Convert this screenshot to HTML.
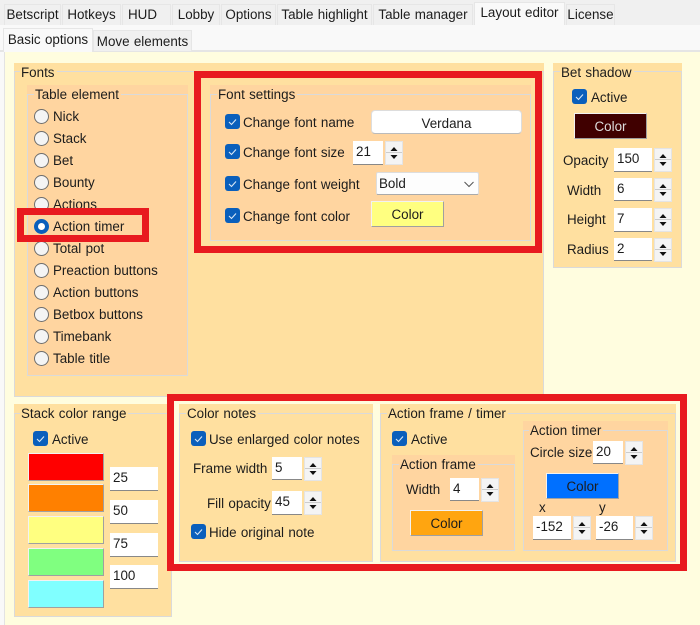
<!DOCTYPE html>
<html><head><meta charset="utf-8"><style>
html,body{margin:0;padding:0}
#r{position:relative;width:700px;height:625px;overflow:hidden;background:#fffddf;font:13.4px/20px "Liberation Sans",sans-serif;word-spacing:.6px;color:#1c1c1c}
#r div{position:absolute;box-sizing:border-box}
.t{white-space:nowrap;height:20px;margin-top:1px}
.tab{background:#f0f0f0;border:1px solid #e6e6e6;border-bottom:0;text-align:center;line-height:20px;white-space:nowrap}
.o{background:#ffe0a0}.a{background:#ffd5a0}
.b{border:1px solid #dadada}
.l{white-space:nowrap;height:17px;line-height:17px;padding:0 2px 0 1px}
.c{width:15px;height:15px;background:#0a5fbc;border-radius:3px}
.c svg{position:absolute;left:0;top:0}
.r{width:15px;height:15px;border-radius:50%;background:#f4f4f4;border:1.5px solid #6e6e6e}
.i{background:#fff;border-bottom:1px solid #888;line-height:22px;padding-left:3px}
.s{width:18px;background:#f4f4f4;border:1px solid #e4e4e4}
.s svg{position:absolute;left:0;top:0}
.k{border:1px solid #f2f2f2;border-bottom-color:#a0a0a0;border-right-color:#a0a0a0;text-align:center;line-height:26px}
.red{border:7px solid #e81a1f}
</style></head><body><div id="r">
<div style="left:0;top:0;width:700px;height:25px;background:#f0f0f0"></div>
<div style="left:0;top:25px;width:700px;height:27px;background:#f9f9f9"></div>
<div style="left:0;top:50px;width:700px;height:2px;background:#e5e5e5"></div>
<div style="left:0;top:52px;width:4px;height:573px;background:#f9f9f9"></div>
<div style="left:4px;top:52px;width:1px;height:573px;background:#e3e3e3"></div>
<div class="tab" style="left:4px;top:4px;width:57px;height:21px">Betscript</div>
<div class="tab" style="left:62px;top:4px;width:59px;height:21px">Hotkeys</div>
<div class="tab" style="left:122px;top:4px;width:49px;height:21px;text-align:left;padding-left:5px">HUD</div>
<div class="tab" style="left:172px;top:4px;width:48px;height:21px">Lobby</div>
<div class="tab" style="left:221px;top:4px;width:55px;height:21px">Options</div>
<div class="tab" style="left:277px;top:4px;width:95px;height:21px">Table highlight</div>
<div class="tab" style="left:373px;top:4px;width:100px;height:21px">Table manager</div>
<div class="tab" style="left:474px;top:2px;width:91px;height:23px;background:#f9f9f9">Layout editor</div>
<div class="tab" style="left:566px;top:4px;width:49px;height:21px">License</div>
<div class="tab" style="left:3px;top:28px;width:90px;height:24px;background:#f9f9f9;line-height:22px">Basic options</div>
<div class="tab" style="left:93px;top:30px;width:99px;height:21px;line-height:21px">Move elements</div>

<div class="o" style="left:14px;top:63px;width:530px;height:334px"></div>
<div class="b" style="left:14px;top:71px;width:530px;height:326px"></div>
<div class="t o l" style="left:20px;top:63px">Fonts</div>
<div class="a" style="left:27px;top:85px;width:161px;height:291px"></div>
<div class="b" style="left:27px;top:94px;width:161px;height:282px"></div>
<div class="t a l" style="left:34px;top:85px">Table element</div>

<div class="r" style="left:34px;top:109px"></div><div class="t" style="left:53px;top:106px">Nick</div>
<div class="r" style="left:34px;top:131px"></div><div class="t" style="left:53px;top:128px">Stack</div>
<div class="r" style="left:34px;top:153px"></div><div class="t" style="left:53px;top:150px">Bet</div>
<div class="r" style="left:34px;top:175px"></div><div class="t" style="left:53px;top:172px">Bounty</div>
<div class="r" style="left:34px;top:197px"></div><div class="t" style="left:53px;top:194px">Actions</div>
<div class="r" style="left:34px;top:219px;background:#fff;border:4px solid #0a5fbc"></div><div class="t" style="left:53px;top:216px">Action timer</div>
<div class="r" style="left:34px;top:241px"></div><div class="t" style="left:53px;top:238px">Total pot</div>
<div class="r" style="left:34px;top:263px"></div><div class="t" style="left:53px;top:260px">Preaction buttons</div>
<div class="r" style="left:34px;top:285px"></div><div class="t" style="left:53px;top:282px">Action buttons</div>
<div class="r" style="left:34px;top:307px"></div><div class="t" style="left:53px;top:304px">Betbox buttons</div>
<div class="r" style="left:34px;top:329px"></div><div class="t" style="left:53px;top:326px">Timebank</div>
<div class="r" style="left:34px;top:351px"></div><div class="t" style="left:53px;top:348px">Table title</div>
<div class="red" style="left:17px;top:208px;width:132px;height:34px"></div>

<div class="a" style="left:210px;top:85px;width:321px;height:156px"></div>
<div class="b" style="left:210px;top:94px;width:321px;height:147px"></div>
<div class="t a l" style="left:217px;top:85px">Font settings</div>
<div class="red" style="left:194px;top:71px;width:348px;height:182px"></div>

<div class="c" style="left:225px;top:114px"><svg width="15" height="15"><path d="M4 8l2.500 2.500L11 5.500" fill="none" stroke="#dbe8f6" stroke-width="1.100"/></svg></div>
<div class="t" style="left:243px;top:112px">Change font name</div>
<div style="left:371px;top:110px;width:151px;height:24px;background:#fff;border:1px solid #ddd;border-bottom-color:#bbb;border-radius:4px;text-align:center;line-height:25px">Verdana</div>
<div class="c" style="left:225px;top:144px"><svg width="15" height="15"><path d="M4 8l2.500 2.500L11 5.500" fill="none" stroke="#dbe8f6" stroke-width="1.100"/></svg></div>
<div class="t" style="left:243px;top:142px">Change font size</div>
<div class="i" style="left:353px;top:141px;width:30px;height:24px">21</div>
<div class="s" style="left:385px;top:141px;height:24px"><svg width="16" height="22"><path d="M0 10.500h16" stroke="#ccc"/><path d="M8 5l3.500 4h-7z M4.500 13h7l-3.500 4z" fill="#111"/></svg></div>
<div class="c" style="left:225px;top:176px"><svg width="15" height="15"><path d="M4 8l2.500 2.500L11 5.500" fill="none" stroke="#dbe8f6" stroke-width="1.100"/></svg></div>
<div class="t" style="left:243px;top:174px">Change font weight</div>
<div style="left:376px;top:172px;width:103px;height:23px;background:#fdfdfd;border:1px solid #ddd;border-bottom-color:#aaa;border-radius:2px;line-height:21px;padding-left:2px">Bold<svg style="position:absolute;left:87px;top:8px" width="10" height="7"><path d="M.5 1l4.500 4.500L9.500 1" fill="none" stroke="#555"/></svg></div>
<div class="c" style="left:225px;top:208px"><svg width="15" height="15"><path d="M4 8l2.500 2.500L11 5.500" fill="none" stroke="#dbe8f6" stroke-width="1.100"/></svg></div>
<div class="t" style="left:243px;top:206px">Change font color</div>
<div class="k" style="left:371px;top:201px;width:73px;height:26px;background:#ffff80">Color</div>

<div class="o" style="left:553px;top:63px;width:129px;height:205px"></div>
<div class="b" style="left:553px;top:71px;width:129px;height:197px"></div>
<div class="t o l" style="left:560px;top:63px">Bet shadow</div>
<div class="c" style="left:572px;top:89px"><svg width="15" height="15"><path d="M4 8l2.500 2.500L11 5.500" fill="none" stroke="#dbe8f6" stroke-width="1.100"/></svg></div>
<div class="t" style="left:591px;top:87px">Active</div>
<div class="k" style="left:574px;top:113px;width:73px;height:26px;background:#400000;color:#ddd">Color</div>
<div class="t" style="left:563px;top:150px">Opacity</div>
<div class="i" style="left:614px;top:148px;width:38px;height:24px">150</div>
<div class="s" style="left:654px;top:148px;height:24px"><svg width="16" height="22"><path d="M0 10.500h16" stroke="#ccc"/><path d="M8 5l3.500 4h-7z M4.500 13h7l-3.500 4z" fill="#111"/></svg></div>
<div class="t" style="left:567px;top:180px">Width</div>
<div class="i" style="left:614px;top:178px;width:38px;height:23px">6</div>
<div class="s" style="left:654px;top:178px;height:24px"><svg width="16" height="22"><path d="M0 10.500h16" stroke="#ccc"/><path d="M8 5l3.500 4h-7z M4.500 13h7l-3.500 4z" fill="#111"/></svg></div>
<div class="t" style="left:567px;top:209px">Height</div>
<div class="i" style="left:614px;top:208px;width:38px;height:24px">7</div>
<div class="s" style="left:654px;top:208px;height:24px"><svg width="16" height="22"><path d="M0 10.500h16" stroke="#ccc"/><path d="M8 5l3.500 4h-7z M4.500 13h7l-3.500 4z" fill="#111"/></svg></div>
<div class="t" style="left:567px;top:239px">Radius</div>
<div class="i" style="left:614px;top:238px;width:38px;height:23px">2</div>
<div class="s" style="left:654px;top:238px;height:24px"><svg width="16" height="22"><path d="M0 10.500h16" stroke="#ccc"/><path d="M8 5l3.500 4h-7z M4.500 13h7l-3.500 4z" fill="#111"/></svg></div>

<div class="o" style="left:14px;top:404px;width:158px;height:213px"></div>
<div class="b" style="left:14px;top:413px;width:158px;height:204px"></div>
<div class="t o l" style="left:20px;top:404px">Stack color range</div>
<div class="c" style="left:33px;top:431px"><svg width="15" height="15"><path d="M4 8l2.500 2.500L11 5.500" fill="none" stroke="#dbe8f6" stroke-width="1.100"/></svg></div>
<div class="t" style="left:52px;top:429px">Active</div>
<div class="k" style="left:28px;top:453px;width:76px;height:28px;background:#ff0000"></div>
<div class="k" style="left:28px;top:484px;width:76px;height:28px;background:#ff8000"></div>
<div class="k" style="left:28px;top:516px;width:76px;height:28px;background:#ffff80"></div>
<div class="k" style="left:28px;top:548px;width:76px;height:28px;background:#80ff80"></div>
<div class="k" style="left:28px;top:580px;width:76px;height:28px;background:#80ffff"></div>
<div class="i" style="left:110px;top:467px;width:48px;height:24px">25</div>
<div class="i" style="left:110px;top:500px;width:48px;height:24px">50</div>
<div class="i" style="left:110px;top:533px;width:48px;height:24px">75</div>
<div class="i" style="left:110px;top:565px;width:48px;height:24px">100</div>

<div style="left:172px;top:394px;width:515px;height:177px;background:#fffddf"></div>
<div class="red" style="left:167px;top:394px;width:520px;height:177px"></div>

<div class="o" style="left:179px;top:404px;width:194px;height:158px"></div>
<div class="b" style="left:179px;top:413px;width:194px;height:149px"></div>
<div class="t o l" style="left:186px;top:404px">Color notes</div>
<div class="c" style="left:191px;top:431px"><svg width="15" height="15"><path d="M4 8l2.500 2.500L11 5.500" fill="none" stroke="#dbe8f6" stroke-width="1.100"/></svg></div>
<div class="t" style="left:209px;top:429px">Use enlarged color notes</div>
<div class="t" style="left:193px;top:458px">Frame width</div>
<div class="i" style="left:272px;top:457px;width:30px;height:23px">5</div>
<div class="s" style="left:304px;top:457px;height:24px"><svg width="16" height="22"><path d="M0 10.500h16" stroke="#ccc"/><path d="M8 5l3.500 4h-7z M4.500 13h7l-3.500 4z" fill="#111"/></svg></div>
<div class="t" style="left:207px;top:493px">Fill opacity</div>
<div class="i" style="left:272px;top:491px;width:30px;height:24px">45</div>
<div class="s" style="left:304px;top:491px;height:24px"><svg width="16" height="22"><path d="M0 10.500h16" stroke="#ccc"/><path d="M8 5l3.500 4h-7z M4.500 13h7l-3.500 4z" fill="#111"/></svg></div>
<div class="c" style="left:191px;top:524px"><svg width="15" height="15"><path d="M4 8l2.500 2.500L11 5.500" fill="none" stroke="#dbe8f6" stroke-width="1.100"/></svg></div>
<div class="t" style="left:209px;top:522px">Hide original note</div>

<div class="o" style="left:380px;top:404px;width:296px;height:158px"></div>
<div class="b" style="left:380px;top:413px;width:296px;height:149px"></div>
<div class="t o l" style="left:387px;top:404px">Action frame / timer</div>
<div class="c" style="left:392px;top:431px"><svg width="15" height="15"><path d="M4 8l2.500 2.500L11 5.500" fill="none" stroke="#dbe8f6" stroke-width="1.100"/></svg></div>
<div class="t" style="left:411px;top:429px">Active</div>

<div class="a" style="left:392px;top:455px;width:123px;height:96px"></div>
<div class="b" style="left:392px;top:464px;width:123px;height:87px"></div>
<div class="t a l" style="left:399px;top:455px">Action frame</div>
<div class="t" style="left:406px;top:479px">Width</div>
<div class="i" style="left:450px;top:478px;width:29px;height:23px">4</div>
<div class="s" style="left:481px;top:478px;height:24px"><svg width="16" height="22"><path d="M0 10.500h16" stroke="#ccc"/><path d="M8 5l3.500 4h-7z M4.500 13h7l-3.500 4z" fill="#111"/></svg></div>
<div class="k" style="left:410px;top:510px;width:73px;height:26px;background:#ffa510">Color</div>

<div class="a" style="left:523px;top:421px;width:145px;height:130px"></div>
<div class="b" style="left:523px;top:430px;width:145px;height:121px"></div>
<div class="t a l" style="left:529px;top:421px">Action timer</div>
<div class="t" style="left:530px;top:442px">Circle size</div>
<div class="i" style="left:593px;top:441px;width:30px;height:23px">20</div>
<div class="s" style="left:625px;top:441px;height:24px"><svg width="16" height="22"><path d="M0 10.500h16" stroke="#ccc"/><path d="M8 5l3.500 4h-7z M4.500 13h7l-3.500 4z" fill="#111"/></svg></div>
<div class="k" style="left:546px;top:473px;width:73px;height:26px;background:#0070ff">Color</div>
<div class="t" style="left:539px;top:497px">x</div>
<div class="t" style="left:599px;top:497px">y</div>
<div class="i" style="left:533px;top:516px;width:38px;height:24px">-152</div>
<div class="s" style="left:573px;top:516px;height:24px"><svg width="16" height="22"><path d="M0 10.500h16" stroke="#ccc"/><path d="M8 5l3.500 4h-7z M4.500 13h7l-3.500 4z" fill="#111"/></svg></div>
<div class="i" style="left:596px;top:516px;width:37px;height:24px">-26</div>
<div class="s" style="left:635px;top:516px;height:24px"><svg width="16" height="22"><path d="M0 10.500h16" stroke="#ccc"/><path d="M8 5l3.500 4h-7z M4.500 13h7l-3.500 4z" fill="#111"/></svg></div>
</div></body></html>
